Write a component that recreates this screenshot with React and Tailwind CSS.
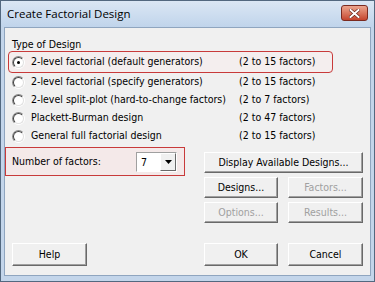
const font = { fontFamily: '"DejaVu Sans Condensed", "DejaVu Sans", sans-serif' };

function Radio({ checked }) {
  return (
    <span className="relative inline-block w-[13px] h-[13px] rounded-full border border-t-[#8a8a8a] border-l-[#8a8a8a] border-b-[#ffffff] border-r-[#ffffff] bg-white shrink-0">
      <span className="absolute inset-0 rounded-full border border-t-[#404040] border-l-[#404040] border-b-[#e0e0e0] border-r-[#e0e0e0]" />
      {checked && <span className="absolute left-[4px] top-[4px] w-[3px] h-[3px] rounded-full bg-black" />}
    </span>
  );
}

function Btn({ children, disabled, className = '' }) {
  return (
    <div className={`flex items-center justify-center bg-[#f0f0f0] border border-t-white border-l-white border-b-[#696969] border-r-[#696969] shadow-[inset_-1px_-1px_0_#a0a0a0] ${disabled ? 'text-[#a0a0a0]' : 'text-black'} ${className}`}>
      {children}
    </div>
  );
}

const options = [
  ['2-level factorial (default generators)', '(2 to 15 factors)', true],
  ['2-level factorial (specify generators)', '(2 to 15 factors)'],
  ['2-level split-plot (hard-to-change factors)', '(2 to 7 factors)'],
  ['Plackett-Burman design', '(2 to 47 factors)'],
  ['General full factorial design', '(2 to 15 factors)'],
];

export default function App() {
  return (
    <div className="w-[375px] h-[282px] flex flex-col bg-[#c3d5ea] border border-[#53687f] overflow-hidden" style={font}>
      <div className="h-[26px] shrink-0 flex items-center justify-between pl-[6px] pr-[6px] bg-gradient-to-b from-[#dbe7f4] to-[#c0d4eb]">
        <span className="text-[11.5px] text-black" style={{ fontFamily: '"Open Sans", "DejaVu Sans", sans-serif' }}>Create Factorial Design</span>
        <div className="w-[27px] h-[16px] mt-[-2px] rounded-[3px] border border-[#7a2a20] bg-gradient-to-b from-[#eba58e] to-[#c4432d] flex items-center justify-center">
          <svg width="11" height="9" viewBox="0 0 11 9">
            <path d="M1.5 1 L9.5 8 M9.5 1 L1.5 8" stroke="#5a1a10" strokeWidth="3.2" strokeLinecap="square" />
            <path d="M1.5 1 L9.5 8 M9.5 1 L1.5 8" stroke="#ffffff" strokeWidth="2" strokeLinecap="square" />
          </svg>
        </div>
      </div>
      <div className="flex-1 mx-[3px] mb-[5px] bg-[#f0f0f0] border border-[#8fa5bf] flex flex-col text-[10.5px] text-black">
        <div className="pl-[7px] pt-[10px] leading-[12px]">Type of Design</div>
        <div className="mt-[1px] flex flex-col">
          {options.map(([label, range, checked]) => (
            <div
              key={label}
              className={`flex items-center ${checked ? 'ml-[3px] w-[325px] h-[22px] border border-[#c83a3a] rounded-[4px] bg-[#f4eeee]' : 'ml-[4px] w-[324px] h-[18px]'}`}
            >
              <span className="ml-[3px] flex"><Radio checked={checked} /></span>
              <span className="ml-[6px] w-[208px] whitespace-nowrap">{label}</span>
              <span className="whitespace-nowrap">{range}</span>
            </div>
          ))}
        </div>
        <div className="mt-[2px] flex">
          <div className="flex flex-col">
            <div className="w-[180px] h-[29px] border border-[#c83a3a] bg-[#f4e9e9] flex items-center pl-[6px]">
              <span className="w-[124px]">Number of factors:</span>
              <div className="w-[41px] h-[20px] flex border border-t-[#a0a0a0] border-l-[#a0a0a0] border-b-white border-r-white bg-white">
                <span className="flex-1 pl-[4px] leading-[18px]">7</span>
                <div className="w-[16px] h-full bg-[#f0f0f0] border border-t-white border-l-white border-b-[#696969] border-r-[#696969] flex items-center justify-center">
                  <svg width="7" height="4" viewBox="0 0 7 4"><path d="M0 0 H7 L3.5 4 Z" fill="#000" /></svg>
                </div>
              </div>
            </div>
            <Btn className="w-[75px] h-[23px] ml-[7px] mt-[67px]">Help</Btn>
          </div>
          <div className="ml-[19px] mt-[5px] flex flex-col">
            <Btn className="w-[159px] h-[21px]">Display Available Designs...</Btn>
            <div className="mt-[4px] flex gap-[10px]">
              <Btn className="w-[74px] h-[21px]">Designs...</Btn>
              <Btn className="w-[75px] h-[21px]" disabled>Factors...</Btn>
            </div>
            <div className="mt-[4px] flex gap-[10px]">
              <Btn className="w-[74px] h-[21px]" disabled>Options...</Btn>
              <Btn className="w-[75px] h-[21px]" disabled>Results...</Btn>
            </div>
            <div className="mt-[20px] flex gap-[10px]">
              <Btn className="w-[74px] h-[23px]">OK</Btn>
              <Btn className="w-[75px] h-[23px]">Cancel</Btn>
            </div>
          </div>
        </div>
      </div>
    </div>
  );
}
